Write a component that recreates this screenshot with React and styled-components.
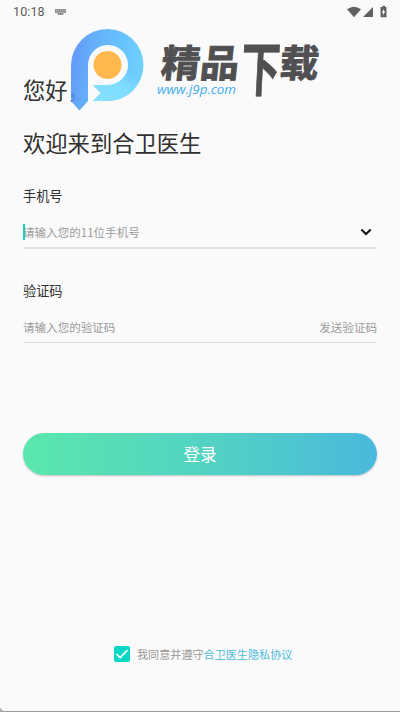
import React from "react";
import styled, { createGlobalStyle } from "styled-components";

const GlobalStyle = createGlobalStyle`
  * { box-sizing: border-box; }
  body { margin: 0; background: #fafafa; overflow: hidden; }
  button, input { font-family: inherit; }
`;

const Screen = styled.main`
  position: relative;
  display: flex;
  flex-direction: column;
  width: 400px;
  height: 712px;
  padding: 0 23px;
  overflow: hidden;
  background: #fafafa;
  border-bottom: 1px solid #999;
  border-bottom-left-radius: 5px;
  color: #303030;
  font-family: "Noto Sans CJK SC", sans-serif;
`;

const Backdrop = styled.div`
  background: #aaa;
`;

const StatusBar = styled.header`
  display: flex;
  align-items: center;
  height: 23px;
  margin: 0 -10px;
  color: #5c5c5c;
  font: 400 12.5px/23px Roboto, sans-serif;
  letter-spacing: 0.1px;
`;

const StatusIcons = styled.div`
  display: flex;
  align-items: center;
  margin-left: auto;
  margin-right: -3px;
`;

const KeyboardIcon = styled.svg`
  margin-left: 10px;
`;

const Heading = styled.h1`
  margin: ${({ $top }) => $top}px 0 0;
  height: 32px;
  font-size: 22.3px;
  font-weight: 400;
  line-height: 32px;
`;

const Field = styled.section`
  display: flex;
  flex-direction: column;
  height: ${({ $strong }) => ($strong ? 63 : 62)}px;
  margin-top: ${({ $top }) => $top}px;
  border-bottom: ${({ $strong }) => ($strong ? "2px solid #e0e4e7" : "1px solid #dbe2e6")};
`;

const Label = styled.label`
  font-size: 13.2px;
  line-height: 20px;
`;

const InputRow = styled.div`
  display: flex;
  align-items: center;
  height: 20px;
  margin-top: 16px;
  color: #9a9a9a;
  font-size: 11.55px;
  line-height: 20px;
`;

const Placeholder = styled.span`
  flex: 1;
`;

const Caret = styled.span`
  width: 2px;
  height: 16px;
  margin-right: -2px;
  background: #12d5c0;
`;

const Chevron = styled.svg`
  margin-right: 5px;
`;

const LoginButton = styled.button`
  height: 42.5px;
  margin-top: 89.5px;
  padding: 1px 0 0;
  border: 0;
  border-radius: 22px;
  background: linear-gradient(90deg, #5be7ac, #53d2c4 53%, #49b9dc);
  box-shadow: 0 1px 2px rgba(0, 0, 0, 0.24);
  color: #fff;
  font-size: 16.6px;
  line-height: 41.5px;
`;

const Agreement = styled.footer`
  display: flex;
  align-items: center;
  align-self: flex-start;
  height: 18px;
  margin: 170px 0 0 91px;
  color: #999;
  font-size: 11.1px;
  line-height: 18px;
`;

const Checkbox = styled.span`
  display: grid;
  place-items: center;
  width: 16px;
  height: 16px;
  margin-right: 7px;
  border-radius: 2px;
  background: #08d7c5;
`;

const PolicyLink = styled.span`
  color: #4dbbdc;
`;

const Watermark = styled.svg`
  position: absolute;
  top: 4px;
  left: 64px;
  pointer-events: none;
`;

function BrandWatermark() {
  return (
    <Watermark width="264" height="132" viewBox="64 4 264 132">
      <defs>
        <linearGradient id="pin" x1="72" y1="82" x2="137" y2="92" gradientUnits="userSpaceOnUse">
          <stop offset="0" stopColor="#5293f7" />
          <stop offset="0.28" stopColor="#55aafb" />
          <stop offset="0.65" stopColor="#56bcfd" />
          <stop offset="1" stopColor="#62cbfe" />
        </linearGradient>
        <linearGradient id="tail" x1="132" y1="74" x2="112" y2="98" gradientUnits="userSpaceOnUse">
          <stop offset="0" stopColor="#7fdcff" stopOpacity="0" />
          <stop offset="0.5" stopColor="#7fdcff" />
          <stop offset="1" stopColor="#83dfff" />
        </linearGradient>
      </defs>
      <circle cx="107.5" cy="65" r="21" fill="#fafafa" />
      <path
        d="M71 101V65.5A36.5 36.5 0 0 1 107.5 29A36 36 0 0 1 107.5 101H93L101 93L93 85H107.5A20 20 0 1 0 88 65V101L79.5 110.5Z"
        fill="url(#pin)"
        fillOpacity="0.9"
      />
      <path d="M93 85H107.5A20 20 0 0 0 127.5 65H143.5A36 36 0 0 1 107.5 101H93L101 93Z" fill="url(#tail)" />
      <circle cx="107.5" cy="65" r="14" fill="#ffb84d" />
      <g fill="#505052" stroke="#505052" fontFamily="Noto Sans CJK SC, sans-serif" fontWeight="700">
        <text transform="translate(160 77) skewX(-6) scale(1 .97)" fontSize="39" strokeWidth="1">精品</text>
        <text transform="translate(240 90.5) skewX(-3) scale(.74 1.12)" fontSize="53" strokeWidth="0.8">下</text>
        <text transform="translate(278.5 77) skewX(-6) scale(1 .97)" fontSize="39" strokeWidth="1">载</text>
      </g>
      <text
        x="157"
        y="93.5"
        fill="#42adf0"
        fontFamily="Open Sans, sans-serif"
        fontStyle="italic"
        fontSize="13"
        textLength="79"
        lengthAdjust="spacingAndGlyphs"
      >
        www.j9p.com
      </text>
    </Watermark>
  );
}

export default function App() {
  return (
    <Backdrop>
      <GlobalStyle />
      <Screen>
        <StatusBar>
          <span>10:18</span>
          <KeyboardIcon width="11" height="8" viewBox="0 0 11 8">
            <path d="M0 1H11V5H9L8 7H3L2 5H0Z" fill="#929292" />
            <path d="M1 2.5H10M2 4.5H9" stroke="#d2d2d2" strokeWidth=".7" strokeDasharray="1 1" />
          </KeyboardIcon>
          <StatusIcons>
            <svg width="43" height="16" viewBox="0 0 43 16" fill="#606060">
              <path d="M0 5.2Q7 .2 14 5.2L7 13.3Z" />
              <path d="M26 3V13H16Z" />
              <path d="M34 3H35.5V1.8H38V3H39.5V13.2H33.5V3Z" />
              <path d="M37.2 4.5L34.7 8.8H36.2L35.8 11.7L38.3 7.3H36.8Z" fill="#fafafa" />
            </svg>
          </StatusIcons>
        </StatusBar>
        <Heading $top={50}>您好，</Heading>
        <Heading $top={21}>欢迎来到合卫医生</Heading>
        <Field $top={28} $strong>
          <Label>手机号</Label>
          <InputRow>
            <Caret />
            <Placeholder>请输入您的11位手机号</Placeholder>
            <Chevron width="12" height="8" viewBox="0 0 12 8" fill="none" stroke="#111" strokeWidth="2">
              <path d="M1.3 1.5L6 6L10.7 1.5" />
            </Chevron>
          </InputRow>
        </Field>
        <Field $top={32}>
          <Label>验证码</Label>
          <InputRow>
            <Placeholder>请输入您的验证码</Placeholder>
            <span>发送验证码</span>
          </InputRow>
        </Field>
        <LoginButton type="button">登录</LoginButton>
        <Agreement>
          <Checkbox>
            <svg width="14" height="12" viewBox="0 0 14 12" fill="none" stroke="#fff" strokeWidth="1.7">
              <path d="M1.5 6L5.2 9.5L12.5 2.2" />
            </svg>
          </Checkbox>
          <span>我同意并遵守</span>
          <PolicyLink>合卫医生隐私协议</PolicyLink>
        </Agreement>
        <BrandWatermark />
      </Screen>
    </Backdrop>
  );
}
